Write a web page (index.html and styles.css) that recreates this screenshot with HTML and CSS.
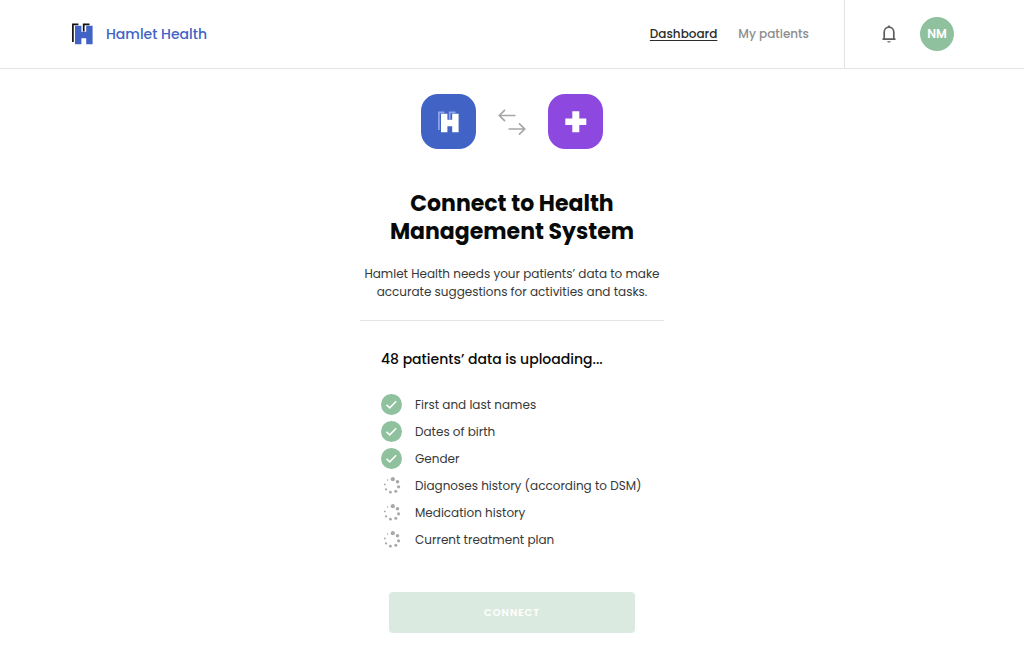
FILE: index.html
```html
<!DOCTYPE html>
<html lang="en">
<head>
<meta charset="utf-8">
<meta name="viewport" content="width=device-width, initial-scale=1">
<title>Hamlet Health</title>
<link rel="stylesheet" href="styles.css">
</head>
<body>
<svg class="sprite" aria-hidden="true">
  <symbol id="mark" viewBox="0 0 21 21">
    <path class="mark-back" d="M.9 18.5V.9H6.4M11.7 8V.9H17.5"/>
    <path class="mark-front" d="M3 2.3h6.4v6h4.8v-6h6.4v18.4h-6.4v-6H9.4v6H3z"/>
  </symbol>
  <symbol id="check" viewBox="0 0 21 21">
    <circle cx="10.5" cy="10.5" r="10.5" fill="#8fc19f"/>
    <path d="M5.5 10.7l3.2 3.2 6.5-6.6" fill="none" stroke="#fff" stroke-width="1.5"/>
  </symbol>
  <symbol id="spinner" viewBox="0 0 21 21">
    <g fill="#a9a9a9">
      <circle cx="11.8" cy="4.2" r="2.1"/>
      <circle cx="16.5" cy="6.8" r="1.8"/>
      <circle cx="17.6" cy="11.8" r="1.6"/>
      <circle cx="14.8" cy="16.3" r="1.5"/>
      <circle cx="9.4" cy="17.2" r="1.4"/>
      <circle cx="5" cy="14.4" r="1.1"/>
      <circle cx="3.8" cy="9.4" r=".9"/>
      <circle cx="6.6" cy="5" r=".7"/>
    </g>
  </symbol>
</svg>

<header class="header">
  <a class="brand" href="#">
    <svg class="brand-mark" aria-hidden="true"><use href="#mark"/></svg>
    <span>Hamlet Health</span>
  </a>
  <nav class="nav">
    <a class="nav-link active" href="#" aria-current="page">Dashboard</a>
    <a class="nav-link" href="#">My patients</a>
  </nav>
  <div class="account">
    <button class="bell" type="button" aria-label="Notifications">
      <svg viewBox="0 0 18 20" width="18" height="20" fill="none" stroke="#5c5c5c" stroke-width="1.7" aria-hidden="true">
        <path d="M4.2 15V8.2a4.8 5 0 0 1 9.6 0V15M2.5 15.2h13M9 3.4V1.4"/>
        <path d="M7.2 17.2h3.6a1.8 1.4 0 0 1-3.6 0z" fill="#5c5c5c" stroke="none"/>
      </svg>
    </button>
    <button class="avatar" type="button">NM</button>
  </div>
</header>

<main class="main">
  <div class="link-icons">
    <div class="tile tile-blue"><svg class="tile-mark" aria-hidden="true"><use href="#mark"/></svg></div>
    <svg viewBox="0 0 28 26" width="28" height="26" fill="none" stroke="#a5a8a6" stroke-width="1.7" aria-hidden="true">
      <path d="M17.5 6.5H1.5M7 .8L1.3 6.5 7 12.2M10.5 20h16M21 14.3l5.7 5.7-5.7 5.7"/>
    </svg>
    <div class="tile tile-purple">
      <svg viewBox="0 0 22 22" width="22" height="22" aria-hidden="true"><path d="M7.3.3h7v7.2h7v6.6h-7v7.2h-7v-7.2h-7V7.5h7z" fill="#fff"/></svg>
    </div>
  </div>

  <h1 class="title">Connect to Health Management System</h1>
  <p class="intro">Hamlet Health needs your patients’ data to make accurate suggestions for activities and tasks.</p>

  <section class="upload">
    <h2 class="subtitle">48 patients’ data is uploading...</h2>
    <ul class="steps">
      <li class="step"><svg class="step-icon" aria-hidden="true"><use href="#check"/></svg>First and last names</li>
      <li class="step"><svg class="step-icon" aria-hidden="true"><use href="#check"/></svg>Dates of birth</li>
      <li class="step"><svg class="step-icon" aria-hidden="true"><use href="#check"/></svg>Gender</li>
      <li class="step"><svg class="step-icon" aria-hidden="true"><use href="#spinner"/></svg>Diagnoses history (according to DSM)</li>
      <li class="step"><svg class="step-icon" aria-hidden="true"><use href="#spinner"/></svg>Medication history</li>
      <li class="step"><svg class="step-icon" aria-hidden="true"><use href="#spinner"/></svg>Current treatment plan</li>
    </ul>
  </section>

  <button class="connect" type="button" disabled>CONNECT</button>
</main>
</body>
</html>
```
FILE: styles.css
```css
* {
  box-sizing: border-box;
}

body {
  margin: 0;
  background: #fff;
  color: #363838;
  font-family: Poppins, Inter, sans-serif;
  font-size: 12px;
  line-height: 18px;
}

button {
  border: 0;
  padding: 0;
  font: inherit;
}

.sprite {
  display: none;
}

.header {
  display: flex;
  align-items: stretch;
  min-height: 69px;
  padding: 0 70px 0 72px;
  border-bottom: 1px solid #e3e4e4;
}

.brand {
  display: flex;
  align-items: center;
  gap: 13px;
  color: #4263c6;
  font-size: 14px;
  font-weight: 500;
  text-decoration: none;
}

.brand-mark {
  width: 21px;
  height: 22px;
}

.mark-back {
  fill: none;
  stroke: var(--mark-back);
  stroke-width: 1.7;
}

.mark-front {
  fill: var(--mark-front);
}

.brand-mark {
  --mark-back: #111;
  --mark-front: #4263c6;
}

.nav {
  display: flex;
  align-items: center;
  gap: 21px;
  margin-left: auto;
  padding-right: 35px;
}

.nav-link {
  color: #8c8e8d;
  font-weight: 500;
  text-decoration: none;
}

.nav-link.active {
  color: #2b2d2c;
  text-decoration: underline;
  text-underline-offset: 2px;
}

.account {
  display: flex;
  align-items: center;
  gap: 22px;
  padding-left: 35px;
  border-left: 1px solid #e3e4e4;
}

.bell {
  display: flex;
  background: none;
}

.avatar {
  width: 34px;
  height: 34px;
  border-radius: 50%;
  background: #8fc19f;
  color: #fff;
  font-weight: 600;
}

.main {
  display: flex;
  flex-direction: column;
  align-items: center;
  max-width: 304px;
  margin: 0 auto;
  padding: 25px 0 22px;
}

.link-icons {
  display: flex;
  align-items: center;
  gap: 22px;
}

.tile {
  display: flex;
  align-items: center;
  justify-content: center;
  width: 55px;
  height: 55px;
  border-radius: 17px;
}

.tile-blue {
  background: #4263c6;
}

.tile-purple {
  background: #8d48e0;
}

.tile-mark {
  width: 21px;
  height: 22px;
  --mark-back: #8ea6ec;
  --mark-front: #fff;
}

.title {
  margin: 41px 0 0;
  color: #080a09;
  font-size: 22px;
  font-weight: 700;
  line-height: 28px;
  text-align: center;
}

.intro {
  margin: 19px 0 0;
  text-align: center;
}

.upload {
  align-self: stretch;
  margin-top: 19px;
  padding: 29px 21px 0;
  border-top: 1px solid #e3e4e4;
}

.subtitle {
  margin: 0;
  color: #080a09;
  font-size: 14px;
  font-weight: 500;
}

.steps {
  display: grid;
  gap: 6px;
  margin: 26px 0 0;
  padding: 0;
  list-style: none;
}

.step {
  display: flex;
  align-items: center;
  gap: 13px;
  white-space: nowrap;
}

.step-icon {
  flex: none;
  width: 21px;
  height: 21px;
}

.connect {
  width: 246px;
  height: 41px;
  margin-top: 42px;
  border-radius: 4px;
  background: #dbeae0;
  color: #fff;
  font-size: 10px;
  font-weight: 600;
  letter-spacing: 1px;
}
```
